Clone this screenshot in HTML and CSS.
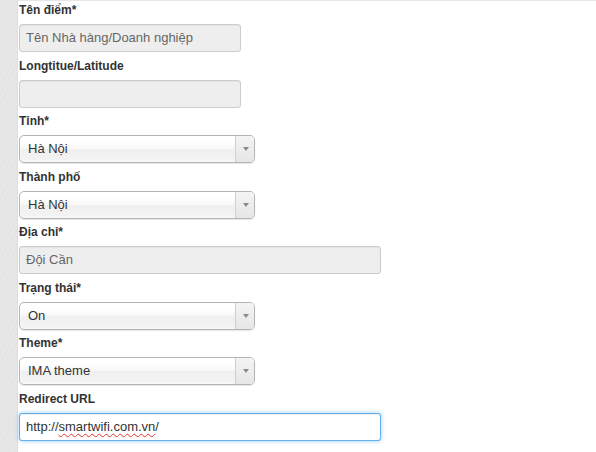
FILE: index.html
```html
<!DOCTYPE html>
<html lang="vi">
<head>
<meta charset="utf-8">
<title>Form</title>
<link rel="stylesheet" href="styles.css">
</head>
<body>
<div class="page">
  <aside class="strip"></aside>
  <main class="content">
    <div class="field">
      <div class="label">Tên điểm*</div>
      <div class="input disabled w-sm">Tên Nhà hàng/Doanh nghiệp</div>
    </div>
    <div class="field">
      <div class="label">Longtitue/Latitude</div>
      <div class="input disabled w-sm"></div>
    </div>
    <div class="field">
      <div class="label">Tỉnh*</div>
      <div class="select"><span class="select-text">Hà Nội</span><span class="select-arrow"><span class="tri"></span></span></div>
    </div>
    <div class="field">
      <div class="label">Thành phố</div>
      <div class="select"><span class="select-text">Hà Nội</span><span class="select-arrow"><span class="tri"></span></span></div>
    </div>
    <div class="field">
      <div class="label">Địa chỉ*</div>
      <div class="input disabled w-lg">Đội Cần</div>
    </div>
    <div class="field">
      <div class="label">Trạng thái*</div>
      <div class="select"><span class="select-text">On</span><span class="select-arrow"><span class="tri"></span></span></div>
    </div>
    <div class="field">
      <div class="label">Theme*</div>
      <div class="select"><span class="select-text">IMA theme</span><span class="select-arrow"><span class="tri"></span></span></div>
    </div>
    <div class="field">
      <div class="label">Redirect URL</div>
      <div class="input focus w-lg">http://<span class="spell">smartwifi.com.vn</span>/</div>
    </div>
  </main>
</div>
</body>
</html>
```

FILE: styles.css
```css
html, body {
  margin: 0;
  padding: 0;
  background: #fff;
}
body {
  font-family: "Liberation Sans", Arial, sans-serif;
  color: #333;
}
.page {
  display: flex;
  min-height: 452px;
}
.strip {
  width: 17px;
  flex: none;
  background-color: #e6e6e6;
  background-image:
    repeating-linear-gradient(37deg, rgba(0,0,0,0.012) 0 1px, transparent 1px 3px),
    repeating-linear-gradient(-61deg, rgba(255,255,255,0.12) 0 1px, transparent 1px 5px);
  border-right: 1px solid #dedede;
}
.content {
  flex: 1;
  border-top: 1px solid #e6e6e6;
  padding: 2px 0 0 1px;
}
.field {
  margin-bottom: 6.5px;
}
.label {
  font-size: 12px;
  font-weight: bold;
  line-height: 14px;
  color: #333;
  margin-bottom: 7px;
}
.input {
  box-sizing: border-box;
  height: 28px;
  border: 1px solid #ccc;
  border-radius: 3px;
  font-size: 13px;
  line-height: 26px;
  padding: 0 6px;
  white-space: nowrap;
  overflow: hidden;
}
.w-sm { width: 222px; }
.w-lg { width: 362px; }
.input.disabled {
  background: #eeeeee;
  color: #666;
  box-shadow: inset 0 1px 1px rgba(0,0,0,0.05);
}
.input.focus {
  background: #fff;
  color: #333;
  border-color: rgba(82,168,236,0.9);
  box-shadow: inset 0 1px 1px rgba(0,0,0,0.075), 0 0 4px rgba(82,168,236,0.6);
}
.spell {
  text-decoration: underline wavy #e0302a;
  text-decoration-thickness: 1px;
  text-underline-offset: 2px;
}
.select {
  box-sizing: border-box;
  width: 236px;
  height: 28px;
  display: flex;
  border: 1px solid #b4b4b4;
  border-radius: 5px;
  background: linear-gradient(#ffffff 20%, #f7f7f7 50%, #efefef 52%, #f4f4f4 100%);
  box-shadow: inset 0 0 3px #fff, 0 1px 1px rgba(0,0,0,0.1);
  overflow: hidden;
}
.select-text {
  flex: 1;
  font-size: 13px;
  line-height: 26px;
  padding-left: 8px;
  color: #333;
}
.select-arrow {
  width: 18px;
  flex: none;
  border-left: 1px solid #cfcfcf;
  background: linear-gradient(#f4f4f4, #e6e6e6);
  display: flex;
  align-items: center;
  justify-content: center;
}
.tri {
  width: 0;
  height: 0;
  border-left: 3px solid transparent;
  border-right: 3px solid transparent;
  border-top: 4px solid #8a8a8a;
  margin-left: 1px;
}
```
